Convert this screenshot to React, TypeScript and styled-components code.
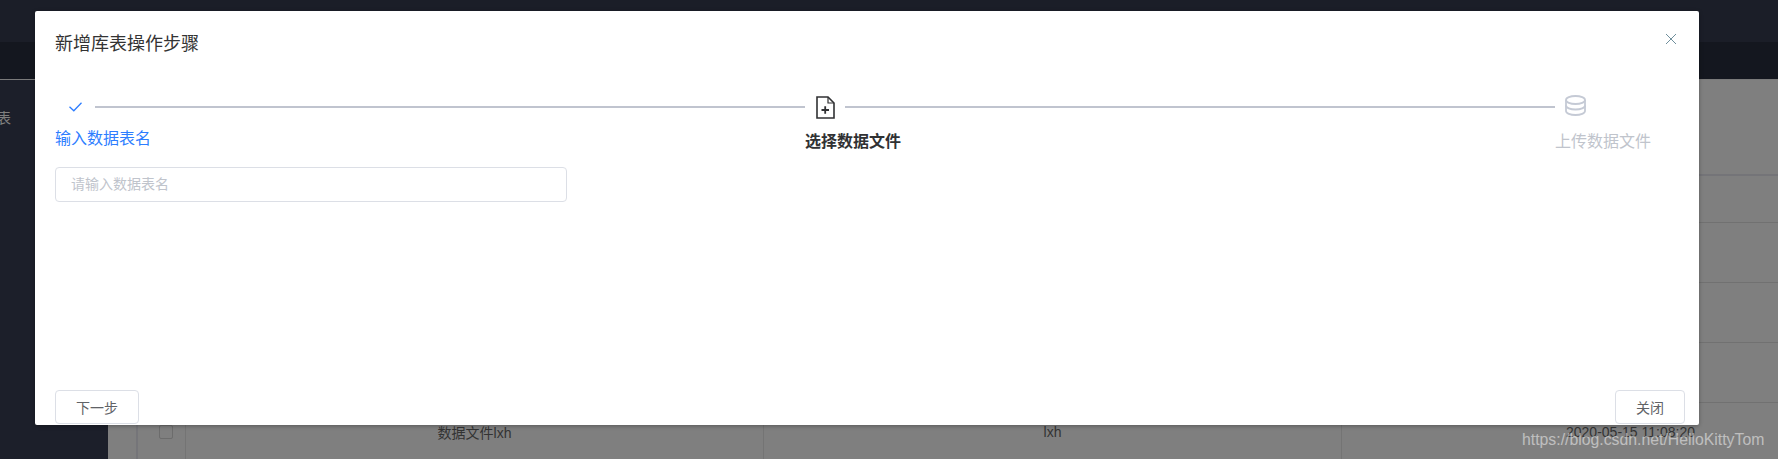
import React from "react";
import styled, { createGlobalStyle } from "styled-components";

const Global = createGlobalStyle`
  html, body { margin: 0; padding: 0; background: #1c1f2a; }
  * { box-sizing: border-box; }
  body { font-family: "Liberation Sans", "Noto Sans CJK SC", sans-serif; overflow: hidden; }
`;

const Page = styled.div`
  position: relative;
  width: 1778px;
  height: 459px;
  overflow: hidden;
  display: flex;
  flex-direction: column;
  background: #1c1f2a;
`;
const TopBar = styled.div`
  height: 42px;
  flex: none;
  background: #1b1e28;
`;
const SubBar = styled.div`
  height: 37px;
  flex: none;
  background: #14171f;
`;
const Divider = styled.div`
  height: 1px;
  flex: none;
  background: #7a7a7a;
`;
const Body = styled.div`
  flex: 1;
  display: flex;
  min-height: 0;
`;
const Sidebar = styled.aside`
  width: 108px;
  flex: none;
  background: #1c1f2a;
  padding-top: 28px;
  overflow: hidden;
`;
const SideItem = styled.div`
  margin-left: -3px;
  font-size: 14px;
  line-height: 20px;
  color: #7f7f7f;
`;
const Main = styled.main`
  flex: 1;
  background: #7f7f7f;
  padding-left: 28px;
  display: flex;
  flex-direction: column;
`;
const TableHead = styled.div`
  flex: none;
  height: 96px;
  margin-left: -28px;
  border-bottom: 2px solid #747478;
`;
const Row = styled.div<{ $h: number }>`
  flex: none;
  height: ${(p) => p.$h}px;
  display: grid;
  grid-template-columns: 48px 578px 578px 1fr;
  border-bottom: 1px solid #717171;
  border-left: 2px solid #757579;
`;
const Cell = styled.div`
  display: flex;
  align-items: center;
  justify-content: center;
  padding-bottom: 2px;
  font-size: 14px;
  color: #333333;
  border-right: 1px solid #747474;
  &:last-child { border-right: 0; }
`;
const CheckCell = styled(Cell)`
  padding-left: 8px;
`;
const DateCell = styled(Cell)`
  justify-content: flex-start;
  padding-left: 224px;
`;
const Checkbox = styled.span`
  width: 14px;
  height: 14px;
  border: 1px solid #6c6c6c;
  border-radius: 2px;
`;
const Watermark = styled.div`
  position: absolute;
  left: 1522px;
  top: 429px;
  font-family: "Liberation Sans", sans-serif;
  font-size: 15.8px;
  line-height: 22px;
  color: rgba(255, 255, 255, 0.5);
  white-space: nowrap;
`;

const Modal = styled.section`
  position: absolute;
  left: 35px;
  top: 11px;
  width: 1664px;
  height: 414px;
  background: #fff;
  border-radius: 2px;
  box-shadow: 0 1px 4px rgba(0, 0, 0, 0.3);
  display: flex;
  flex-direction: column;
`;
const ModalHead = styled.header`
  display: flex;
  justify-content: space-between;
  padding: 20px 23px 0 20px;
`;
const Title = styled.h2`
  margin: 0;
  font-size: 18px;
  line-height: 26px;
  font-weight: 400;
  color: #333333;
`;
const CloseBtn = styled.button`
  border: 0;
  background: none;
  padding: 0;
  margin-top: 3px;
  width: 10px;
  height: 10px;
  display: block;
  color: #6f8f9c;
  line-height: 0;
`;
const ModalBody = styled.div`
  flex: 1;
  padding: 38px 20px 0;
`;
const Steps = styled.div`
  display: flex;
`;
const Step = styled.div<{ $last?: boolean }>`
  flex: ${(p) => (p.$last ? "0 0 auto" : "0 0 750px")};
`;
const StepHead = styled.div`
  display: flex;
  align-items: center;
  height: 24px;
`;
const StepIcon = styled.div<{ $lift?: boolean }>`
  flex: none;
  width: 40px;
  height: 24px;
  display: flex;
  justify-content: center;
  align-items: ${(p) => (p.$lift ? "flex-start" : "center")};
`;
const StepLine = styled.div`
  flex: 1;
  height: 2px;
  background: #c0c4cf;
`;
const StepLabel = styled.div<{ $state: "done" | "active" | "wait" }>`
  margin-top: ${(p) => (p.$state === "done" ? 8 : 11)}px;
  font-size: 16px;
  line-height: 24px;
  white-space: nowrap;
  font-weight: ${(p) => (p.$state === "active" ? 700 : 400)};
  color: ${(p) =>
    p.$state === "done" ? "#2d7dff" : p.$state === "active" ? "#303133" : "#c0c4cc"};
`;
const TextInput = styled.input`
  display: block;
  width: 512px;
  height: 35px;
  margin-top: 13px;
  padding: 0 15px 2px;
  border: 1px solid #dcdfe6;
  border-radius: 4px;
  font-family: inherit;
  font-size: 14px;
  color: #606266;
  outline: none;
  &::placeholder { color: #c0c4cc; opacity: 1; }
`;
const Footer = styled.footer`
  display: flex;
  justify-content: space-between;
  padding: 0 14px 1px 20px;
`;
const Button = styled.button<{ $w: number }>`
  width: ${(p) => p.$w}px;
  height: 34px;
  padding: 0;
  background: #fff;
  border: 1px solid #dcdfe6;
  border-radius: 4px;
  font-family: inherit;
  font-size: 14px;
  color: #606266;
`;

const CheckIcon = () => (
  <svg width="13" height="10" viewBox="0 0 13 10" fill="none" stroke="#2d7dff" strokeWidth="1.3">
    <path d="M.5 4.8 4.8 8.8 12.5 .8" />
  </svg>
);
const FilePlusIcon = () => (
  <svg width="19" height="23" viewBox="0 0 19 23" fill="none" stroke="#303133" strokeWidth="1.6">
    <path d="M1 1H12L18 7V22H1Z" />
    <path d="M12 1V7H18" strokeWidth="1.2" />
    <path d="M5.5 14H13M9.2 10.2V17.8" strokeWidth="1.8" />
  </svg>
);
const DatabaseIcon = () => (
  <svg width="21" height="21" viewBox="0 0 21 21" fill="none" stroke="#c5cad5" strokeWidth="1.8">
    <ellipse cx="10.5" cy="5" rx="9.5" ry="4" />
    <path d="M1 5V16C1 18.2 5.3 20 10.5 20S20 18.2 20 16V5" />
    <path d="M1 10.5C1 12.7 5.3 14.5 10.5 14.5S20 12.7 20 10.5" />
  </svg>
);
const CloseIcon = () => (
  <svg width="10" height="10" viewBox="0 0 10 10" fill="none" stroke="currentColor" strokeWidth="1">
    <path d="M0 0 10 10M10 0 0 10" />
  </svg>
);

export default function App() {
  return (
    <Page>
      <Global />
      <TopBar />
      <SubBar />
      <Divider />
      <Body>
        <Sidebar>
          <SideItem>表</SideItem>
        </Sidebar>
        <Main>
          <TableHead />
          <Row $h={47} />
          <Row $h={60} />
          <Row $h={60} />
          <Row $h={60} />
          <Row $h={60}>
            <CheckCell>
              <Checkbox />
            </CheckCell>
            <Cell>数据文件lxh</Cell>
            <Cell>lxh</Cell>
            <DateCell>2020-05-15 11:08:20</DateCell>
          </Row>
        </Main>
      </Body>
      <Watermark>https://blog.csdn.net/HelloKittyTom</Watermark>
      <Modal>
        <ModalHead>
          <Title>新增库表操作步骤</Title>
          <CloseBtn aria-label="关闭">
            <CloseIcon />
          </CloseBtn>
        </ModalHead>
        <ModalBody>
          <Steps>
            <Step>
              <StepHead>
                <StepIcon>
                  <CheckIcon />
                </StepIcon>
                <StepLine />
              </StepHead>
              <StepLabel $state="done">输入数据表名</StepLabel>
            </Step>
            <Step>
              <StepHead>
                <StepIcon>
                  <FilePlusIcon />
                </StepIcon>
                <StepLine />
              </StepHead>
              <StepLabel $state="active">选择数据文件</StepLabel>
            </Step>
            <Step $last>
              <StepHead>
                <StepIcon $lift>
                  <DatabaseIcon />
                </StepIcon>
              </StepHead>
              <StepLabel $state="wait">上传数据文件</StepLabel>
            </Step>
          </Steps>
          <TextInput placeholder="请输入数据表名" />
        </ModalBody>
        <Footer>
          <Button $w={84}>下一步</Button>
          <Button $w={70}>关闭</Button>
        </Footer>
      </Modal>
    </Page>
  );
}
